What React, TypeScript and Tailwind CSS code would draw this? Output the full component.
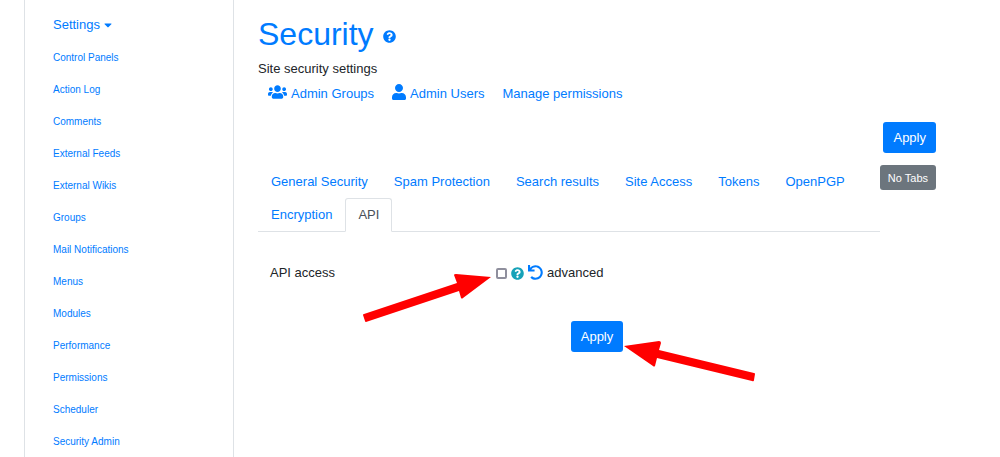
import { FaCaretDown, FaQuestionCircle, FaUndo, FaUser, FaUsers } from "react-icons/fa";

const menuItems = [
  "Control Panels",
  "Action Log",
  "Comments",
  "External Feeds",
  "External Wikis",
  "Groups",
  "Mail Notifications",
  "Menus",
  "Modules",
  "Performance",
  "Permissions",
  "Scheduler",
  "Security Admin",
];

const tabs = [
  "General Security",
  "Spam Protection",
  "Search results",
  "Site Access",
  "Tokens",
  "OpenPGP",
  "Encryption",
  "API",
];

const Sidebar = () => (
  <nav className="w-[210px] shrink-0 border-x border-[#dee2e6] pl-7 pt-4">
    <a href="#" className="flex h-[18px] items-center gap-1">
      Settings <FaCaretDown className="h-3 w-2" />
    </a>
    <ul className="mt-2 text-[10px]">
      {menuItems.map((item) => (
        <li key={item} className="flex h-8 items-center">
          <a href="#">{item}</a>
        </li>
      ))}
    </ul>
  </nav>
);

const Tabs = () => (
  <ul className="flex flex-1 flex-wrap border-b border-[#dee2e6]">
    {tabs.map((tab) => (
      <li key={tab} className="-mb-px">
        <a
          href="#"
          className={
            tab === "API"
              ? "flex h-[34px] items-center rounded-t-[3px] border border-[#dee2e6] border-b-white bg-white px-3 text-[#495057]"
              : "flex h-[34px] items-center border border-transparent px-3"
          }
        >
          {tab}
        </a>
      </li>
    ))}
  </ul>
);

const buttonClass = "h-[31px] rounded-[3px] bg-[#007bff] px-[10px] text-white";

const App = () => {
  return (
    <div className="flex h-screen overflow-hidden bg-white px-6 font-['Liberation_Sans',Arial,sans-serif] text-[13px] leading-5 text-[#007bff]">
      <Sidebar />

      <main className="min-w-0 flex-1 pl-6 pr-10 pt-[15px]">
        <h1 className="flex items-center gap-[9px] text-[32px] leading-[38px]">
          <a href="#">Security</a>
          <a href="#" aria-label="Help" className="pt-1">
            <FaQuestionCircle size={13} />
          </a>
        </h1>
        <p className="mt-[6px] text-[#212529]">Site security settings</p>

        <div className="mt-[5px] flex gap-[18px] px-[10px]">
          <a href="#" className="flex items-start gap-1">
            <FaUsers className="h-4 w-[19px]" /> Admin Groups
          </a>
          <a href="#" className="flex items-start gap-1">
            <FaUser className="h-4 w-[14px]" /> Admin Users
          </a>
          <a href="#">Manage permissions</a>
        </div>

        <form className="mt-[18px]" onSubmit={(e) => e.preventDefault()}>
          <div className="flex justify-end">
            <button type="submit" className={buttonClass}>
              Apply
            </button>
          </div>

          <div className="mt-3 flex items-start">
            <Tabs />
            <button type="button" className="h-[25px] rounded-[3px] bg-[#6c757d] px-2 text-[11px] text-white">
              No Tabs
            </button>
          </div>

          <div className="mt-[31px] flex items-center text-[#212529]">
            <label htmlFor="api" className="w-1/3 pl-3">
              API access
            </label>
            <div className="flex items-center gap-1 pl-3">
              <div className="relative flex">
                <input
                  id="api"
                  type="checkbox"
                  className="size-[11px] appearance-none rounded-[2px] border-2 border-[#8f8f9d] bg-white checked:bg-[#007bff]"
                />
                <svg viewBox="0 0 128 48" className="pointer-events-none absolute right-full top-[6px] mr-[5px] h-12 w-32 max-w-none text-[#ff0000]" fill="currentColor">
                  <path d="M0 41Q0 40 1 40L94 9 91 1Q91 0 93 0L128 3 100 24Q99 25 98 24L96 17 3 48Q2 48 2 47Z" />
                </svg>
              </div>
              <a href="#" aria-label="Help" className="text-[#17a2b8]">
                <FaQuestionCircle size={13} />
              </a>
              <button type="button" aria-label="Reset to default" className="pb-[2px] text-[#007bff]">
                <FaUndo size={15} />
              </button>
              <span>advanced</span>
            </div>
          </div>

          <div className="mt-[38px] flex justify-center">
            <div className="relative flex">
              <button type="submit" className={buttonClass}>
                Apply
              </button>
              <svg viewBox="0 0 132 42" className="pointer-events-none absolute left-full top-5 ml-px h-[42px] w-[132px] max-w-none text-[#ff0000]" fill="currentColor">
                <path d="M0 5 35 0Q37 0 37 2L35 9 130 32Q131 32 131 33L130 39Q130 41 128 40L33 17 31 25Q30 26 29 25Z" />
              </svg>
            </div>
          </div>
        </form>
      </main>
    </div>
  );
};

export default App;
